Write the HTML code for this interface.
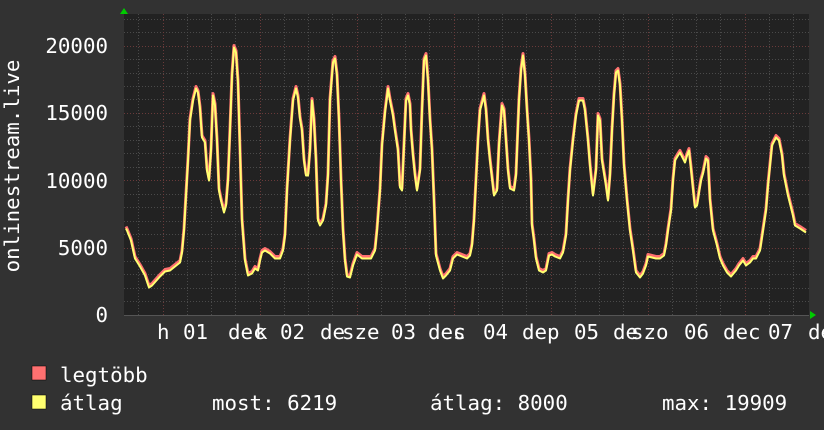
<!DOCTYPE html>
<html><head><meta charset="utf-8"><style>
html,body{margin:0;padding:0;background:#323232;width:824px;height:430px;overflow:hidden}
svg text{font-family:"DejaVu Sans Mono","Liberation Mono",monospace;font-size:20.8px;fill:#fff}
</style></head><body>
<svg width="824" height="430" xmlns="http://www.w3.org/2000/svg">
<rect x="124" y="14" width="685" height="301" fill="#222"/>
<g stroke="#4a4a4a" stroke-width="1" stroke-dasharray="1,2" fill="none">
<path d="M124 301.5H809M124 288.5H809M124 274.5H809M124 261.5H809M124 234.5H809M124 221.5H809M124 207.5H809M124 194.5H809M124 167.5H809M124 153.5H809M124 140.5H809M124 126.5H809M124 99.5H809M124 86.5H809M124 73.5H809M124 59.5H809M124 32.5H809M124 19.5H809"/>
<path d="M138.5 14V315M187.5 14V315M211.5 14V315M235.5 14V315M284.5 14V315M308.5 14V315M332.5 14V315M381.5 14V315M405.5 14V315M429.5 14V315M478.5 14V315M502.5 14V315M526.5 14V315M575.5 14V315M599.5 14V315M623.5 14V315M672.5 14V315M696.5 14V315M720.5 14V315M769.5 14V315M793.5 14V315"/>
</g>
<g stroke="#6a3a3a" stroke-width="1" stroke-dasharray="1,2" fill="none">
<path d="M124 46.5H809M124 113.5H809M124 180.5H809M124 248.5H809"/>
<path d="M163.5 14V315M260.5 14V315M357.5 14V315M454.5 14V315M551.5 14V315M648.5 14V315M745.5 14V315"/>
</g>
<path d="M124 315.5H809" stroke="#555" stroke-width="1"/>
<polygon points="120,14 128,14 124,8" fill="#0c0"/>
<polygon points="810,311 810,319 816,315" fill="#0c0"/>
<defs>
<polyline id="d" points="126,228 127,230 131,240 135,258 140,266 145,275 149,287 152,285 160,276 165,271 170,270 175,266 180,262 182,252 184,230 186,195 188,160 190,120 193,100 196,88 198,92 200,108 202,137 205,142 207,170 209,180 211,150 213,95 215,105 217,140 219,190 221,200 224,212 226,205 228,180 230,130 232,75 234,47 236,52 238,82 240,150 242,220 245,260 248,275 252,273 255,268 258,270 260,260 262,252 265,250 270,253 275,258 280,258 283,250 285,235 287,190 290,140 293,100 296,88 298,97 300,118 302,130 304,160 306,175 308,175 310,150 312,100 314,120 316,160 318,220 320,225 323,220 326,205 328,175 330,100 333,62 335,58 337,75 339,120 341,180 343,230 345,260 347,276 350,277 353,265 357,254 362,258 366,258 371,258 375,250 377,230 380,190 382,145 385,112 388,88 390,100 393,115 395,130 398,150 400,187 402,190 404,145 406,100 408,95 410,105 411,130 413,155 415,175 417,190 420,170 422,110 424,60 426,55 428,80 430,120 432,150 434,200 436,255 440,270 443,278 446,275 450,270 453,258 457,254 462,256 467,258 470,255 472,245 474,220 476,180 478,140 480,110 484,95 486,110 488,140 490,160 494,195 497,190 499,145 502,105 504,110 506,140 508,170 510,188 514,190 516,175 519,100 521,70 523,55 525,75 527,110 529,140 531,180 532,225 534,240 536,258 539,270 543,272 546,270 549,255 552,254 555,256 560,258 563,252 566,235 568,200 570,170 573,140 576,115 579,100 583,100 585,110 588,140 590,165 593,195 596,170 598,115 600,120 602,160 606,185 608,200 610,175 612,130 614,95 616,72 618,70 620,85 622,120 624,165 627,200 630,230 633,250 636,272 640,277 643,273 646,265 648,256 652,257 656,258 660,258 664,255 666,245 668,230 671,210 673,180 675,160 678,155 680,152 683,158 685,162 687,155 689,150 691,168 693,188 695,207 697,205 699,192 701,180 703,173 706,158 708,160 710,200 713,230 717,245 720,258 723,265 727,272 731,276 736,270 739,265 743,260 746,265 750,262 753,258 756,258 760,250 763,230 766,210 768,185 770,165 772,145 776,137 779,140 782,155 784,175 786,185 788,195 791,207 793,215 795,225 800,228 806,232"/>
</defs>
<g fill="none" stroke-linejoin="round">
<use href="#d" stroke="#ff7070" stroke-width="3" transform="translate(0,-1.5)"/>
<use href="#d" stroke="#ffff70" stroke-width="2" transform="translate(0,0.5)"/>
</g>
<g text-anchor="end">
<text x="108" y="53">20000</text>
<text x="108" y="120">15000</text>
<text x="108" y="188">10000</text>
<text x="108" y="255">5000</text>
<text x="108" y="322">0</text>
</g>
<text transform="translate(19,166) rotate(-90)" text-anchor="middle">onlinestream.live</text>
<g>
<text x="157" y="339">h</text><text x="183" y="339">01</text><text x="228" y="339">dec</text>
<text x="255" y="339">k</text><text x="280" y="339">02</text><text x="320" y="339">de</text>
<text x="342" y="339">sze</text><text x="391" y="339">03</text><text x="428" y="339">dec</text>
<text x="453" y="339">s</text><text x="483" y="339">04</text><text x="522" y="339">dep</text>
<text x="574" y="339">05</text><text x="613" y="339">de</text><text x="631" y="339">szo</text>
<text x="684" y="339">06</text><text x="723" y="339">dec</text><text x="768" y="339">07</text><text x="808" y="339">de</text>
</g>
<rect x="32" y="366" width="14" height="14" fill="#ff7070" stroke="#000" stroke-width="0.5"/>
<rect x="32" y="395" width="14" height="14" fill="#ffff70" stroke="#000" stroke-width="0.5"/>
<text x="60" y="382">legtöbb</text>
<text x="60" y="410">átlag</text>
<text x="212" y="410">most: 6219</text>
<text x="430" y="410">átlag: 8000</text>
<text x="662" y="410">max: 19909</text>
</svg>
</body></html>
